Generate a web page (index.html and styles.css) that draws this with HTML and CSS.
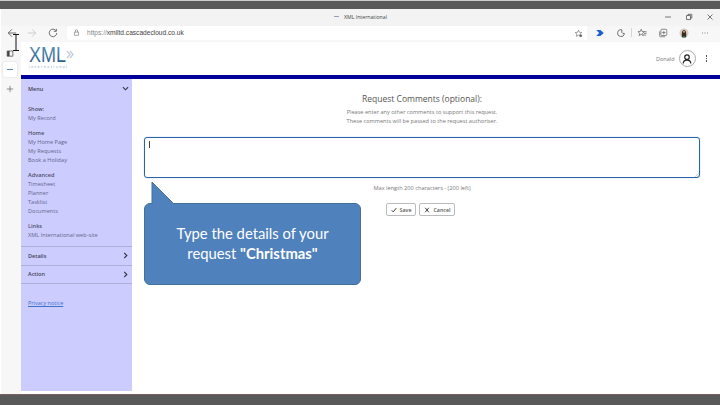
FILE: index.html
```html
<!DOCTYPE html>
<html lang="en">
<head>
<meta charset="utf-8">
<title>XML International</title>
<link rel="stylesheet" href="styles.css">
</head>
<body>
<div class="frame">
  <div class="dark top"></div>
  <div class="browser">
    <div class="titlebar">
      <div class="tab-title"><svg class="fav" viewBox="0 0 8 8"><path d="M0 4h8" stroke="#7f95b0" stroke-width="1.400"/></svg>XML International</div>
      <div class="winbtns">
        <svg viewBox="0 0 8 8"><path d="M1 4h6" stroke="#555" stroke-width=".8"/></svg>
        <svg viewBox="0 0 8 8"><path d="M1.500 2.500h4v4h-4zM3 2.500V1.300h3.800v3.800H5.500" fill="none" stroke="#555" stroke-width=".8"/></svg>
        <svg viewBox="0 0 8 8"><path d="M1.500 1.500l5 5M6.500 1.500l-5 5" stroke="#555" stroke-width=".8"/></svg>
      </div>
    </div>
    <div class="toolbar">
      <svg class="nav" viewBox="0 0 12 12"><path d="M11 6H1.500M6 1.500L1.500 6 6 10.500" fill="none" stroke="#555" stroke-width="1"/></svg>
      <svg class="nav" viewBox="0 0 12 12"><path d="M1 6h9.500M6 1.500L10.500 6 6 10.500" fill="none" stroke="#c8c8c8" stroke-width="1"/></svg>
      <svg class="nav" viewBox="0 0 12 12"><path d="M9.800 3.500A4.500 4.500 0 1 0 10.500 6M10 1v3H7" fill="none" stroke="#555" stroke-width="1"/></svg>
      <div class="address">
        <svg class="lock" viewBox="0 0 10 10"><path d="M2 4.500h6v4.500H2zM3.500 4.500V2.500a1.500 1.500 0 0 1 3 0v2" fill="none" stroke="#666" stroke-width=".8"/></svg>
        <span class="url"><span class="proto">https://</span>xmlltd.cascadecloud.co.uk</span>
        <svg class="addr-star" viewBox="0 0 12 12"><path d="M6 1.500l1.300 2.900 3.100.3-2.300 2 .7 3L6 8.200 3.200 9.700l.7-3-2.300-2 3.100-.3z" fill="none" stroke="#666" stroke-width=".8"/><circle cx="9" cy="9" r="1.800" fill="#666"/></svg>
      </div>
      <div class="tools">
        <svg viewBox="0 0 12 12"><path d="M1.500 2.500h5L10.500 6l-4 3.500h-5L5 6z" fill="#1f5fd0"/></svg>
        <svg viewBox="0 0 12 12"><path d="M7 2.200A4 4 0 1 0 10 6.500H8.200L7 5.300z" fill="none" stroke="#555" stroke-width="1"/></svg>
        <span class="sep"></span>
        <svg viewBox="0 0 12 12"><path d="M5 1.500l1.100 2.700 2.800.2-2.100 1.900.7 2.800L5 7.600 2.500 9.100l.7-2.800L1.100 4.400l2.800-.2zM8.500 4.500h3M8.500 6.500h3M8 8.500h3" fill="none" stroke="#555" stroke-width=".8"/></svg>
        <svg viewBox="0 0 12 12"><path d="M2 4v5.500a1 1 0 0 0 1 1h5.500M3.500 2.500a1 1 0 0 1 1-1h5a1 1 0 0 1 1 1v5.500a1 1 0 0 1-1 1h-5a1 1 0 0 1-1-1zM7 3.500v4M5 5.500h4" fill="none" stroke="#555" stroke-width=".8"/></svg>
        <svg viewBox="0 0 12 12"><circle cx="6" cy="6" r="5.500" fill="#d8cfc4"/><path d="M3.500 11c-.5-4 0-8.500 2.500-8.500S9 7 8.500 11z" fill="#3a2a20"/><circle cx="6" cy="4.500" r="1.300" fill="#c89c80"/><path d="M4 11.500c.3-2.500 3.700-2.500 4 0z" fill="#2f7a4f"/></svg>
        <svg viewBox="0 0 12 12"><path d="M2.500 6h1M5.500 6h1M8.500 6h1" stroke="#555" stroke-width="1"/></svg>
      </div>
    </div>
    <div class="below">
      <div class="tabstrip">
        <svg class="strip-ico" viewBox="0 0 10 10"><path d="M1.500 2.500h7v6.500h-7z" fill="none" stroke="#444" stroke-width=".9"/><path d="M1.500 2.500h3v6.500h-3z" fill="#444"/></svg>
        <div class="strip-tab"><span class="strip-dash"></span></div>
        <svg class="strip-plus" viewBox="0 0 10 10"><path d="M5 1v8M1 5h8" stroke="#555" stroke-width=".8"/></svg>
      </div>
      <div class="page">
        <header class="head">
          <svg class="logo" viewBox="0 0 48 24">
            <defs><linearGradient id="lg" x1="0" y1="0" x2="0" y2="1"><stop offset="0" stop-color="#5d9cc4"/><stop offset="1" stop-color="#1f4f7e"/></linearGradient></defs>
            <text class="logo-xml" x="0" y="17" textLength="37" lengthAdjust="spacingAndGlyphs" fill="url(#lg)">XML</text>
            <path d="M38 6l3 3.500-3 3.500M41 6l3 3.500-3 3.500" fill="none" stroke="#c3ccd6" stroke-width="1.300"/>
            <text class="logo-sub" x="0" y="23" textLength="38" fill="#7c9ab3">international</text>
          </svg>
          <div class="user">
            <span>Donald</span>
            <span class="avatar"><svg viewBox="0 0 16 16"><circle cx="8" cy="5.500" r="3" fill="none" stroke="#222" stroke-width="1.600"/><path d="M3 14c0-6 10-6 10 0" fill="none" stroke="#222" stroke-width="1.600"/></svg></span>
            <span class="kebab"><i></i><i></i><i></i></span>
          </div>
        </header>
        <div class="rule"></div>
        <div class="content">
          <aside class="side">
            <div class="side-head open"><span>Menu</span><svg viewBox="0 0 8 8"><path d="M1 2.500l3 3 3-3" fill="none" stroke="#334" stroke-width="1.300"/></svg></div>
            <nav class="menu">
              <div class="group"><b>Show:</b><a>My Record</a></div>
              <div class="group"><b>Home</b><a>My Home Page</a><a>My Requests</a><a>Book a Holiday</a></div>
              <div class="group"><b>Advanced</b><a>Timesheet</a><a>Planner</a><a>Tasklist</a><a>Documents</a></div>
              <div class="group"><b>Links</b><a>XML International web-site</a></div>
            </nav>
            <div class="side-head"><span>Details</span><svg viewBox="0 0 8 8"><path d="M2.500 1l3 3-3 3" fill="none" stroke="#334" stroke-width="1.300"/></svg></div>
            <div class="side-head"><span>Action</span><svg viewBox="0 0 8 8"><path d="M2.500 1l3 3-3 3" fill="none" stroke="#334" stroke-width="1.300"/></svg></div>
            <a class="privacy">Privacy notice</a>
          </aside>
          <main class="main">
            <h1>Request Comments (optional):</h1>
            <p>Please enter any other comments to support this request.<br>These comments will be passed to the request authoriser.</p>
            <div class="field"><span class="caret"></span><svg class="grip" viewBox="0 0 6 6"><path d="M1 6l5-5M3.500 6L6 3.500" stroke="#999" stroke-width=".6"/></svg></div>
            <div class="maxlen">Max length 200 characters - (200 left)</div>
            <div class="buttons">
              <button class="btn"><svg viewBox="0 0 8 8"><path d="M1 4.500l2 2 4-5" fill="none" stroke="#333" stroke-width="1.300"/></svg>Save</button>
              <button class="btn"><svg viewBox="0 0 8 8"><path d="M1.500 1l5 6M6.500 1l-5 6" fill="none" stroke="#333" stroke-width="1.200"/></svg>Cancel</button>
            </div>
            <div class="callout">
              <svg class="tail" viewBox="0 0 24 23"><path d="M1 22V1l21 21" fill="#4f81bd" stroke="#41719c" stroke-width="1"/><path d="M1.500 23V21H22v2z" fill="#4f81bd"/></svg>
              <div class="bubble"><div>Type the details of your<br>request <strong>"Christmas"</strong></div></div>
            </div>
          </main>
        </div>
      </div>
    </div>
  </div>
  <div class="dark bottom"></div>
  <svg class="ibeam" viewBox="0 0 8 17"><path d="M1 .5h6M4 .5v16M1 16.500h6" fill="none" stroke="#111" stroke-width="1"/></svg>
</div>
</body>
</html>
```
FILE: styles.css
```css
* { box-sizing: border-box; }
html, body { margin: 0; padding: 0; width: 720px; height: 405px; overflow: hidden; background: #fff; }
body { font-family: "Open Sans", "Liberation Sans", sans-serif; color: #555; }
.frame { position: relative; width: 720px; height: 405px; display: flex; flex-direction: column; padding-left: 1px; background: #fff; }
.dark { background: #595959; flex: none; margin-left: -1px; }
.top { height: 9px; border-top: 1px solid #ccc; }
.bottom { height: 11px; border-top: 1px solid #7a5f5f; }
.browser { flex: 1; display: flex; flex-direction: column; min-height: 0; }
.titlebar { height: 17px; background: #f3f3f3; display: flex; align-items: center; justify-content: center; position: relative; padding-bottom: 2px; }
.tab-title { font-size: 5.200px; color: #444; display: flex; align-items: center; gap: 5px; }
.fav { width: 5px; height: 5px; }
.winbtns { position: absolute; right: 6px; top: 4px; display: flex; gap: 13px; }
.winbtns svg { width: 8px; height: 8px; }
.toolbar { height: 16px; background: #f7f7f7; display: flex; align-items: center; padding: 0 0 3px 6px; }
.nav { width: 10px; height: 10px; margin-right: 10px; flex: none; }
.nav:nth-child(2) { margin-right: 11px; }
.nav:nth-child(3) { margin-right: 9px; }
.address { height: 14px; background: #fff; border-radius: 3px 0 0 3px; display: flex; align-items: center; padding-left: 5.500px; position: relative; width: 520px; flex: none; }
.lock { width: 7px; height: 7px; margin-right: 7.500px; }
.url { font-family: "Liberation Sans", sans-serif; font-size: 6.600px; color: #444; }
.proto { color: #888; }
.addr-star { position: absolute; right: 4px; top: 3px; width: 9px; height: 9px; }
.tools { display: flex; align-items: center; gap: 11px; padding-left: 8px; }
.tools svg { width: 10px; height: 10px; flex: none; }
.sep { width: 1px; height: 9px; background: #d5d5d5; margin: 0 -6px; }
.below { flex: 1; display: flex; min-height: 0; }
.tabstrip { width: 20px; background: #f7f7f7; flex: none; display: flex; flex-direction: column; align-items: center; padding: 7px 3px 0 0; }
.strip-ico { width: 8px; height: 8px; }
.strip-tab { width: 14px; height: 15px; margin-top: 5px; background: #fff; border-radius: 2px; box-shadow: 0 0 2px #ccc; display: flex; align-items: center; justify-content: center; }
.strip-dash { width: 6px; height: 1.500px; background: #5a85b5; }
.strip-plus { width: 8px; height: 8px; margin-top: 8px; }
.page { flex: 1; min-width: 0; display: flex; flex-direction: column; background: #fff; }
.head { height: 33px; display: flex; justify-content: space-between; align-items: center; padding: 0 13px 0 8px; }
.logo { width: 48px; height: 24px; flex: none; margin-bottom: 3px; overflow: visible; }
.logo-xml { font-family: "Liberation Sans", sans-serif; font-size: 22px; }
.logo-sub { font-family: "Open Sans", sans-serif; font-size: 3.500px; }
.user { display: flex; align-items: center; font-size: 5.500px; color: #777; }
.avatar { width: 17px; height: 17px; border: 1px solid #aaa; border-radius: 50%; margin-left: 4px; display: flex; align-items: center; justify-content: center; }
.avatar svg { width: 12px; height: 12px; }
.kebab { display: flex; flex-direction: column; gap: 1px; margin-left: 10px; }
.kebab i { width: 1.500px; height: 1.500px; background: #555; display: block; }
.rule { height: 4px; background: #00009a; flex: none; }
.content { flex: 1; min-height: 0; display: flex; padding-bottom: 3px; }
.side { width: 111px; flex: none; background: #ccccff; display: flex; flex-direction: column; }
.side-head { height: 18.500px; flex: none; display: flex; align-items: center; justify-content: space-between; padding: 0 3px 0 7px; font-size: 5.500px; font-weight: 600; color: #445; border-bottom: 1px solid #aeaed8; }
.side-head svg { width: 7px; height: 7px; }
.side-head.open { border-bottom: 0; height: 19px; }
.menu { padding: 7px 7px 6px; display: flex; flex-direction: column; gap: 6px; font-size: 5.600px; line-height: 9px; border-bottom: 1px solid #aeaed8; }
.group { display: flex; flex-direction: column; }
.group b { font-weight: 600; color: #50506a; }
.group a { color: #66668a; }
.privacy { font-size: 5.500px; color: #3a70d0; text-decoration: underline; margin: 15px 0 0 7px; }
.main { flex: 1; min-width: 0; position: relative; display: flex; flex-direction: column; align-items: center; padding: 14px 20px 0 12px; }
h1 { font-size: 8.500px; font-weight: 400; color: #555; margin: 0; line-height: 12px; }
.main p { font-size: 5.600px; line-height: 9px; text-align: center; color: #777; margin: 3px 0 0; }
.field { width: 100%; height: 41px; margin-top: 11px; border: 1.500px solid #2a64a8; border-radius: 3px; position: relative; box-shadow: 0 0 1px #6a9ad8; flex: none; }
.caret { position: absolute; left: 4px; top: 3px; width: 1px; height: 7px; background: #444; }
.grip { position: absolute; right: 0; bottom: 0; width: 5px; height: 5px; }
.maxlen { font-size: 5.650px; color: #777; margin-top: 6px; line-height: 8px; }
.buttons { display: flex; gap: 3px; margin-top: 11px; margin-right: 3px; }
.btn { height: 13px; padding: 0 4px; display: flex; align-items: center; gap: 3px; background: #fff; border: 1px solid #bbb; border-radius: 2px; font-family: "Open Sans", sans-serif; font-size: 5.300px; font-weight: 600; color: #555; }
.btn svg { width: 6px; height: 6px; }
.callout { position: absolute; left: 12px; top: 102px; width: 217px; }
.tail { display: block; width: 24px; height: 23px; margin-left: 7px; margin-bottom: -1px; position: relative; z-index: 1; }
.bubble { height: 82px; padding-bottom: 2px; background: #4f81bd; border: 1px solid #41719c; border-radius: 6px; display: flex; align-items: center; justify-content: center; text-align: center; color: #fff; font-family: "Lato", "Open Sans", sans-serif; font-size: 14.800px; line-height: 20px; }
.bubble strong { font-weight: 700; }
.ibeam { position: absolute; left: 12px; top: 34px; width: 8px; height: 17px; }
```
